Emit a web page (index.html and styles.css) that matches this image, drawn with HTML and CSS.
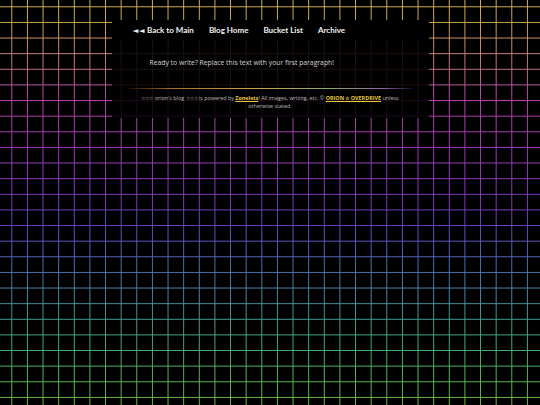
FILE: index.html
```html
<!DOCTYPE html>
<html lang="en">
<head>
<meta charset="utf-8">
<title>orion's blog</title>
<link rel="stylesheet" href="styles.css">
</head>
<body>
<div class="page">
  <nav class="nav">
    <a class="nav-link" href="#"><span class="arrows">◄◄</span> Back to Main</a>
    <a class="nav-link" href="#">Blog Home</a>
    <a class="nav-link" href="#">Bucket List</a>
    <a class="nav-link" href="#">Archive</a>
  </nav>
  <main class="content">
    <p class="intro">Ready to write? Replace this text with your first paragraph!</p>
    <div class="divider"></div>
    <footer class="footer">☆☆☆ orion's blog ☆☆☆ is powered by <a class="hl" href="#">Zonelets</a>! All images, writing, etc. © <a class="hl" href="#">ORION ☆ OVERDRIVE</a> unless otherwise stated.</footer>
  </main>
</div>
</body>
</html>
```

FILE: styles.css
```css
html {
  background: #000;
}
body {
  margin: 0;
  height: 405px;
  overflow: hidden;
  background-color: #000;
  background-image:
    conic-gradient(from 90deg at 1.4px 1.4px, #000 25%, transparent 0),
    linear-gradient(to bottom,
      #d2b454 0px,
      #c8a650 28px,
      #c88e6e 45px,
      #c26e8c 68px,
      #b848aa 100px,
      #a83eb2 135px,
      #8c3abe 180px,
      #6e42c2 220px,
      #5266bc 255px,
      #448ca2 295px,
      #42aa84 340px,
      #50b858 375px,
      #6cbc3a 405px);
  background-size: 15.63px 15.63px, 100% 405px;
  background-position: 11.3px 6.3px, 0 0;
  background-repeat: repeat, no-repeat;
}
.page {
  width: 317px;
  margin: 20px auto 0;
}
.nav {
  height: 20px;
  background: #000;
  display: flex;
  align-items: center;
  gap: 15px;
  padding-left: 21px;
  font-family: Lato, "Liberation Sans", sans-serif;
  font-weight: 700;
  font-size: 8px;
}
.nav-link {
  color: #f2f2f2;
  text-decoration: none;
  white-space: nowrap;
}
.arrows {
  font-family: "DejaVu Sans", sans-serif;
  font-size: 7.5px;
  letter-spacing: 0.5px;
}
.content {
  background: rgba(0, 0, 0, 0.86);
  padding: 18px 17px 7px;
  font-family: "Open Sans", "Liberation Sans", sans-serif;
}
.intro {
  margin: 0;
  padding-left: 21px;
  font-size: 6.8px;
  line-height: 9px;
  color: #d4d4d4;
}
.divider {
  height: 1px;
  margin-top: 21px;
  background: linear-gradient(to right, rgba(150, 80, 20, 0.2), #a86a28 15%, #c8a448 45%, #8aa868 70%, #8a60a8 90%, rgba(100, 60, 140, 0.2));
}
.footer {
  margin-top: 5px;
  text-align: center;
  font-size: 5.4px;
  line-height: 8.3px;
  color: #bdbdbd;
}
.hl {
  color: #e8c838;
  font-weight: 700;
  text-decoration: underline;
}
```
